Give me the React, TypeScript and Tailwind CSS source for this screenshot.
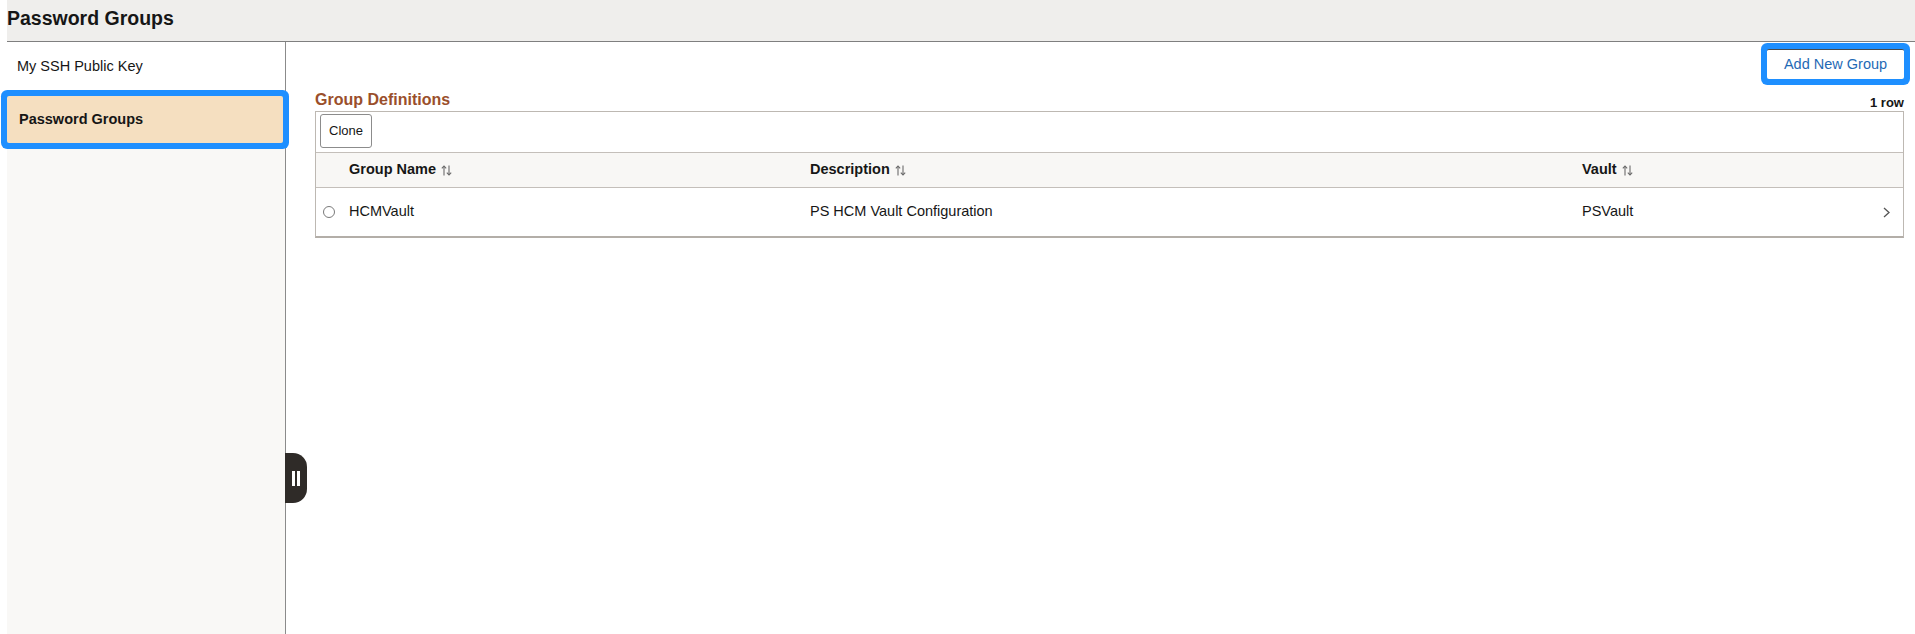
import React from "react";

const SortIcon = () => (
  <svg width="11" height="11" viewBox="0 0 11 11" className="ml-[5px] inline-block" fill="none" stroke="#6b6b6b" strokeWidth="1.1">
    <path d="M3 10.5V1" />
    <path d="M0.8 3.3L3 1L5.2 3.3" />
    <path d="M8 0.5V10" />
    <path d="M5.8 7.7L8 10L10.2 7.7" />
  </svg>
);

const Chevron = () => (
  <svg width="7" height="11" viewBox="0 0 7 11" fill="none" stroke="#555" strokeWidth="1.3">
    <path d="M1 1L6 5.5L1 10" />
  </svg>
);

export default function App() {
  const font = { fontFamily: '"Liberation Sans", Arial, Helvetica, sans-serif' };
  return (
    <div className="w-full h-[634px] pl-[7px] bg-white flex flex-col text-[#161616]" style={font}>
      <div className="h-[42px] shrink-0 bg-[#efeeec] border-b border-[#7f7f7f] pt-[7px]">
        <div className="text-[19.5px] leading-[23px] font-bold">Password Groups</div>
      </div>
      <div className="flex flex-1 min-h-0">
        <div className="w-[279px] shrink-0 bg-[#f9f8f6] border-r border-[#8b8b8b] flex flex-col">
          <div className="h-[48px] leading-[48px] bg-white pl-[10px] text-[14.5px]">My SSH Public Key</div>
          <div className="mt-[6px] mr-[2px] h-[47px] leading-[47px] bg-[#f5dfc0] pl-[12px] text-[14.5px] font-bold relative z-10 rounded-[2px] shadow-[0_0_0_6px_#1e8fff]">
            Password Groups
          </div>
        </div>
        <div className="flex-1 relative pl-[29px] pr-[11px]">
          <div className="absolute left-[-1px] top-[411px] w-[22px] h-[50px] bg-[#2f2b28] rounded-r-[14px] flex items-center justify-center gap-[2px] z-20">
            <div className="w-[3px] h-[15px] bg-white" />
            <div className="w-[3px] h-[15px] bg-white" />
          </div>
          <div className="flex justify-end pt-[7px]">
            <button className="w-[137px] h-[30px] bg-white border-t border-[#4a4a4a] text-[#1f6ab5] text-[14.5px] rounded-[2px] shadow-[0_0_0_6px_#1e8fff]">
              Add New Group
            </button>
          </div>
          <div className="flex justify-between items-end h-[32px]">
            <div className="text-[16px] leading-[18px] font-bold text-[#9a4f2b] mb-[2.5px]">Group Definitions</div>
            <div className="text-[13px] leading-[15px] font-bold mb-[1px]">1 row</div>
          </div>
          <div className="border border-[#bdb8b2] border-b-2 border-b-[#b3aea8]">
            <div className="h-[41px] border-b border-[#c4bfba] pt-[2px] pl-[4px]">
              <button className="w-[52px] h-[34px] border border-[#8c8c8c] rounded-[3px] bg-white text-[13px] text-[#161616]">
                Clone
              </button>
            </div>
            <div className="grid grid-cols-[33px_461px_772px_1fr] h-[35px] bg-[#f8f7f5] border-b border-[#c4bfba] items-center text-[14.5px] font-bold">
              <div />
              <div className="flex items-center">Group Name<SortIcon /></div>
              <div className="flex items-center">Description<SortIcon /></div>
              <div className="flex items-center">Vault<SortIcon /></div>
            </div>
            <div className="grid grid-cols-[33px_461px_772px_1fr] h-[48px] items-center text-[14.5px]">
              <div className="pl-[7px] flex items-center">
                <div className="w-[12px] h-[12px] rounded-full border border-[#7a7a7a] bg-white" />
              </div>
              <div>HCMVault</div>
              <div>PS HCM Vault Configuration</div>
              <div className="flex items-center justify-between pr-[13px]">
                <span>PSVault</span>
                <Chevron />
              </div>
            </div>
          </div>
        </div>
      </div>
    </div>
  );
}
